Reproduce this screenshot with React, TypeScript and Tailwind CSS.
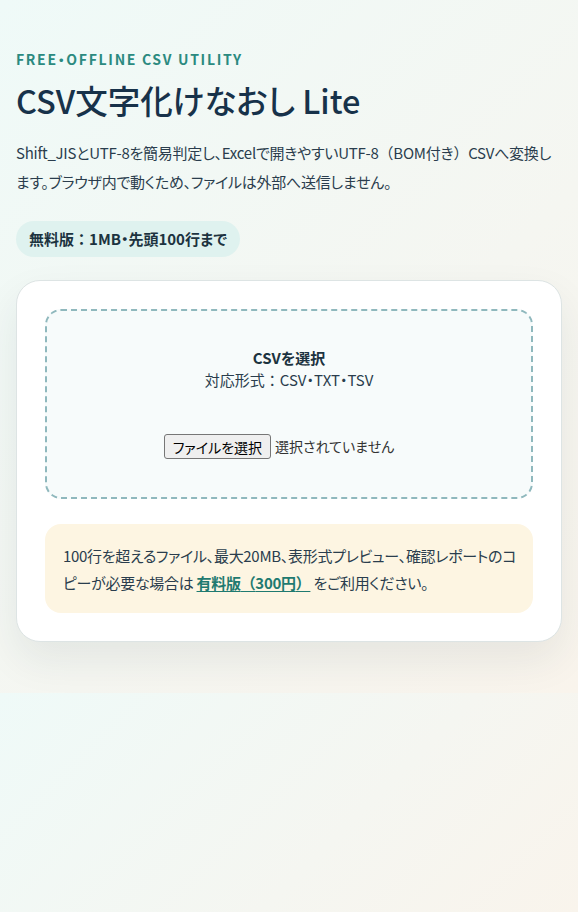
import React from 'react';

const font = {
  fontFamily: '"Noto Sans CJK JP", "Noto Sans", sans-serif',
  fontFeatureSettings: '"palt"',
};

// full-width punctuation keeps its em box, like the reference
function W({ children }: { children: React.ReactNode }) {
  return <span className="[font-feature-settings:normal]">{children}</span>;
}

export default function App() {
  return (
    <div className="min-h-screen text-[#17324a]" style={font}>
      <div className="bg-[linear-gradient(135deg,#effaf8_0%,#f5f6f1_60%,#f9f4ec_100%)] px-4 pt-[48px] pb-[51px]">
        <p className="text-[14px] font-semibold tracking-[0.12em] text-[#2b8a80] leading-[22px]">
          FREE・OFFLINE CSV UTILITY
        </p>
        <h1 className="mt-[10px] text-[32.5px] font-medium leading-[40px] text-[#17324a]">
          CSV文字化けなおし Lite
        </h1>
        <p className="mt-[18px] text-[15px] leading-[29px] tracking-[-0.25px] text-[#2a3d4d]">
          Shift_JISとUTF-8を簡易判定し、Excelで開きやすいUTF-8<W>（</W>BOM付き<W>）</W>CSVへ変換します。ブラウザ内で動くため、ファイルは外部へ送信しません。
        </p>
        <div className="mt-[25px] inline-flex h-[36px] items-center rounded-full bg-[#dff2ef] px-[13px] text-[15px] font-bold text-[#1c3340]">
          <span>
            無料版<W>：</W>1MB・先頭100行まで
          </span>
        </div>

        <div className="mt-[23px] rounded-[24px] border border-[#dde4e4] bg-white p-[28px] shadow-[0_18px_40px_rgba(30,50,60,0.08)]">
          <div className="flex flex-col items-center rounded-[16px] border-2 border-dashed border-[#8fb8bd] bg-[#f7fbfb] pt-[36px] pb-[38px]">
            <p className="text-[15px] font-bold leading-[22px] text-[#1c3340]">CSVを選択</p>
            <p className="text-[15px] leading-[22px] text-[#2a3d4d]">
              対応形式<W>：</W>CSV・TXT・TSV
            </p>
            <div className="mt-[43px] flex items-center gap-[4px] pr-[20px]">
              <button className="h-[25px] rounded-[3px] border border-[#767676] bg-[#efefef] px-[8px] text-[14px] leading-[20px] text-black">
                ファイルを選択
              </button>
              <span className="text-[14px] text-[#333]">選択されていません</span>
            </div>
          </div>

          <div className="mt-[25px] rounded-[16px] bg-[#fdf5e2] pl-[18px] pr-[12px] pt-[18px] pb-[17px] text-[15px] leading-[27px] tracking-[-0.3px] text-[#2a3d4d]">
            100行を超えるファイル、最大20MB、表形式プレビュー、確認レポートのコピーが必要な場合は{' '}
            <a href="#" className="font-bold text-[#1f7a70] underline underline-offset-2">
              有料版<W>（</W>300円<W>）</W>
            </a>{' '}
            をご利用ください。
          </div>
        </div>
      </div>
      <div className="h-[220px] bg-[linear-gradient(135deg,#effaf8_0%,#f5f6f1_60%,#f9f4ec_100%)]" />
    </div>
  );
}
